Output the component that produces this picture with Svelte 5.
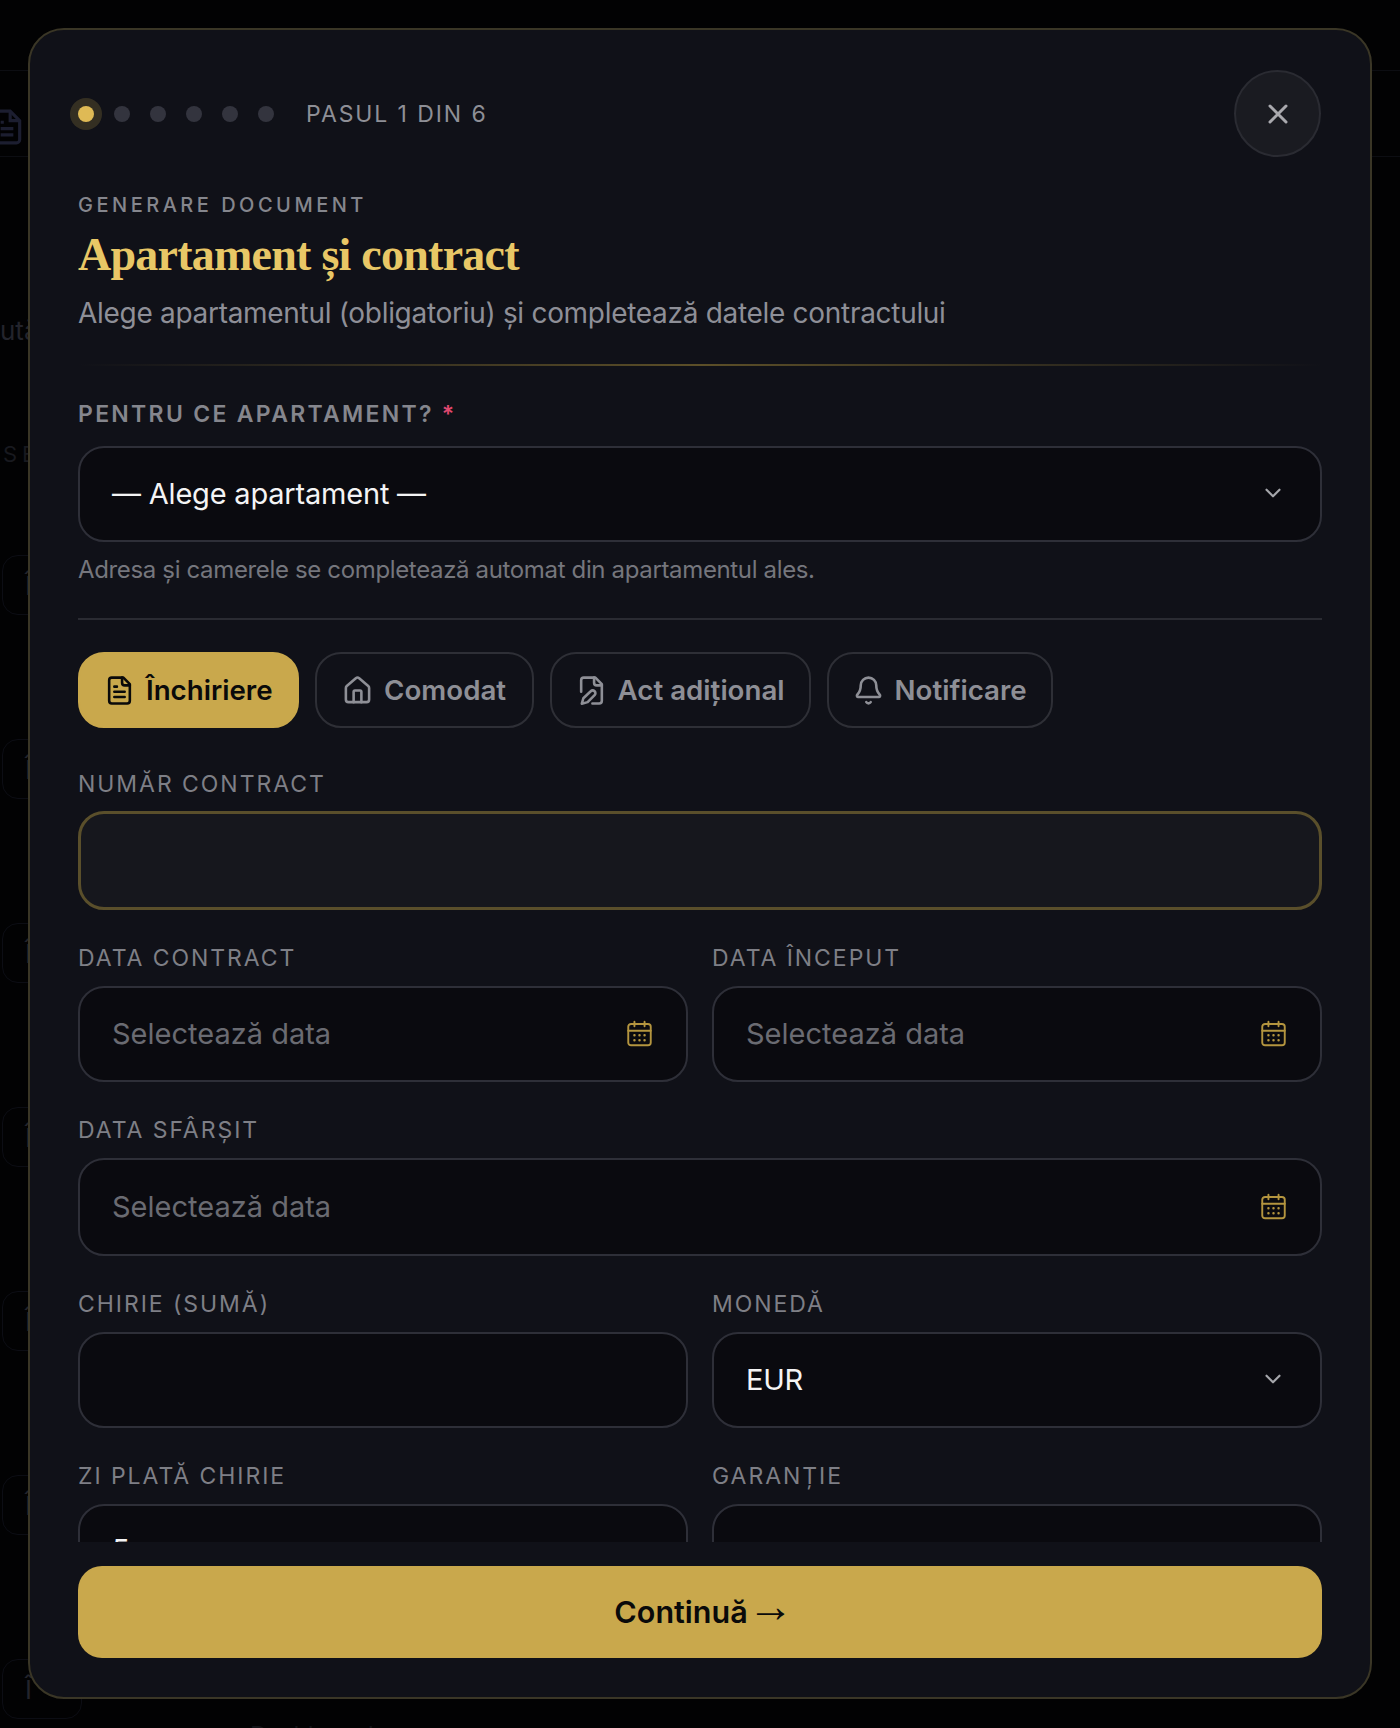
<script>
    const dots = [0, 1, 2, 3, 4, 5];
    const chips = ["Î", "Î", "Î", "Î", "Î", "Î", "Î"];
</script>

<div class="backdrop">
    <div class="bgPanel">
        <svg class="bgIcon" viewBox="0 0 24 24" fill="none" stroke="currentColor" stroke-width="2">
            <path d="M14 2H6a2 2 0 0 0-2 2v16a2 2 0 0 0 2 2h12a2 2 0 0 0 2-2V8z" />
            <path d="M14 2v6h6M16 13H8M16 17H8M10 9H8" />
        </svg>
    </div>
    <div class="bgText">ută</div>
    <div class="bgSection">SE</div>
    <div class="bgList">
        {#each chips as chip}
            <div class="bgChip">{chip}</div>
        {/each}
    </div>
    <div class="bgFoot">Dashboard</div>
</div>

<div class="overlay">
    <div class="modal">

        <div class="head">
            <div class="steps">
                {#each dots as d}
                    <span class="dot" class:active={d == 0}></span>
                {/each}
                <span class="stepText">PASUL 1 DIN 6</span>
            </div>
            <button class="close" aria-label="Inchide">
                <svg viewBox="0 0 20 20" width="20" height="20" fill="none" stroke="currentColor" stroke-width="3" stroke-linecap="round">
                    <path d="M2 2l16 16M18 2L2 18" />
                </svg>
            </button>
        </div>

        <div class="kicker">GENERARE DOCUMENT</div>
        <h1 class="title">Apartament și contract</h1>
        <p class="subtitle">Alege apartamentul (obligatoriu) și completează datele contractului</p>
        <div class="goldLine"></div>

        <div class="scroll">
            <div class="aptLabel">PENTRU CE APARTAMENT? <span class="star">*</span></div>
            <div class="input select apt">
                <span class="value">— Alege apartament —</span>
                <svg class="chev" viewBox="0 0 24 24" fill="none" stroke="currentColor" stroke-width="2" stroke-linecap="round" stroke-linejoin="round"><path d="m6 9 6 6 6-6" /></svg>
            </div>
            <p class="hint">Adresa și camerele se completează automat din apartamentul ales.</p>
            <div class="rule"></div>

            <div class="tabs">
                <button class="tab on">
                    <svg viewBox="0 0 24 24" fill="none" stroke="currentColor" stroke-width="2" stroke-linecap="round" stroke-linejoin="round">
                        <path d="M15 2H6a2 2 0 0 0-2 2v16a2 2 0 0 0 2 2h12a2 2 0 0 0 2-2V7z" />
                        <path d="M14 2v4a2 2 0 0 0 2 2h4M10 9H8M16 13H8M16 17H8" />
                    </svg>
                    Închiriere
                </button>
                <button class="tab">
                    <svg viewBox="0 0 24 24" fill="none" stroke="currentColor" stroke-width="2" stroke-linecap="round" stroke-linejoin="round">
                        <path d="M3 10a2 2 0 0 1 .7-1.5l7-6a2 2 0 0 1 2.600 0l7 6A2 2 0 0 1 21 10v9a2 2 0 0 1-2 2H5a2 2 0 0 1-2-2z" />
                        <path d="M15 21v-8a1 1 0 0 0-1-1h-4a1 1 0 0 0-1 1v8" />
                    </svg>
                    Comodat
                </button>
                <button class="tab">
                    <svg viewBox="0 0 24 24" fill="none" stroke="currentColor" stroke-width="2" stroke-linecap="round" stroke-linejoin="round">
                        <path d="M12.700 22H18a2 2 0 0 0 2-2V7l-5-5H6a2 2 0 0 0-2 2v9" />
                        <path d="M14 2v4a2 2 0 0 0 2 2h4" />
                        <path d="M11.400 12.600a2 2 0 1 1 3 3L9 21l-4.500 1.200L5.700 18z" />
                    </svg>
                    Act adițional
                </button>
                <button class="tab">
                    <svg viewBox="0 0 24 24" fill="none" stroke="currentColor" stroke-width="2" stroke-linecap="round" stroke-linejoin="round">
                        <path d="M10.300 21a2 2 0 0 0 3.400 0" />
                        <path d="M3.300 15.300A1 1 0 0 0 4 17h16a1 1 0 0 0 .7-1.700C19.400 14 18 12.500 18 8A6 6 0 0 0 6 8c0 4.500-1.400 6-2.700 7.300" />
                    </svg>
                    Notificare
                </button>
            </div>

            <div class="field first">
                <div class="label">NUMĂR CONTRACT</div>
                <div class="input focus"></div>
            </div>

            <div class="row">
                <div class="field">
                    <div class="label">DATA CONTRACT</div>
                    <div class="input">
                        <span class="placeholder">Selectează data</span>
                        {@render calendar()}
                    </div>
                </div>
                <div class="field">
                    <div class="label">DATA ÎNCEPUT</div>
                    <div class="input">
                        <span class="placeholder">Selectează data</span>
                        {@render calendar()}
                    </div>
                </div>
            </div>

            <div class="field">
                <div class="label">DATA SFÂRȘIT</div>
                <div class="input tall">
                    <span class="placeholder">Selectează data</span>
                    {@render calendar()}
                </div>
            </div>

            <div class="row">
                <div class="field">
                    <div class="label">CHIRIE (SUMĂ)</div>
                    <div class="input"></div>
                </div>
                <div class="field">
                    <div class="label">MONEDĂ</div>
                    <div class="input select">
                        <span class="value">EUR</span>
                        <svg class="chev" viewBox="0 0 24 24" fill="none" stroke="currentColor" stroke-width="2" stroke-linecap="round" stroke-linejoin="round"><path d="m6 9 6 6 6-6" /></svg>
                    </div>
                </div>
            </div>

            <div class="row">
                <div class="field">
                    <div class="label">ZI PLATĂ CHIRIE</div>
                    <div class="input num"><span class="value">5</span></div>
                </div>
                <div class="field">
                    <div class="label">GARANȚIE</div>
                    <div class="input"></div>
                </div>
            </div>
        </div>

        <div class="foot">
            <button class="next"><span>Continuă</span><span class="arrow">→</span></button>
        </div>

    </div>
</div>

{#snippet calendar()}
    <svg class="cal" viewBox="0 0 24 24" fill="none" stroke="currentColor" stroke-width="1.700" stroke-linecap="round">
        <rect x="2" y="3.500" width="20" height="19" rx="2.500" />
        <path d="M2 9.500h20M7.500 1.500v4M16.500 1.500v4" />
        <path d="M7.500 13.500h.01M12 13.500h.01M16.500 13.500h.01M7.500 18h.01M12 18h.01M16.500 18h.01" stroke-width="2.200" />
    </svg>
{/snippet}

<style>

    :global(body) {
        background-color: #020203;
        font-family: "Inter", "Liberation Sans", sans-serif;
    }

    /* page behind the dialog, only the edges show */
    .backdrop {
        height: 1728px;
        overflow: hidden;
        color: #23242c;
    }

    .bgPanel {
        height: 85px;
        margin-top: 70px;
        display: flex;
        align-items: center;
        border-top: 1px solid #0c0d12;
        border-bottom: 1px solid #0c0d12;
    }

    .bgIcon {
        width: 38px;
        height: 38px;
        margin-left: -12px;
        margin-top: 26px;
        color: #1c1e30;
    }

    .bgText {
        font-size: 26px;
        margin-top: 158px;
        line-height: 32px;
    }

    .bgSection {
        font-size: 22px;
        letter-spacing: 5px;
        margin-top: 93px;
        margin-left: 3px;
        line-height: 28px;
        color: #18191f;
    }

    .bgList {
        display: flex;
        flex-direction: column;
        gap: 124px;
        margin-top: 87px;
    }

    .bgChip {
        width: 80px;
        height: 60px;
        margin-left: 2px;
        padding-left: 22px;
        box-sizing: border-box;
        line-height: 60px;
        font-size: 26px;
        border: 1px solid #0c0d14;
        border-radius: 16px;
    }

    .bgFoot {
        margin: 2px 0 0 250px;
        font-size: 24px;
        color: #131418;
    }

    .overlay {
        position: fixed;
        inset: 0;
        padding: 28px;
        box-sizing: border-box;
    }

    .modal {
        height: 1671px;
        box-sizing: border-box;
        background-color: #101118;
        border: 2px solid #3a3626;
        border-radius: 36px;
        padding: 40px 48px 39px;
        display: flex;
        flex-direction: column;
        overflow: hidden;
    }

    .head {
        display: flex;
        justify-content: space-between;
        align-items: center;
        height: 87px;
        flex: none;
    }

    .steps {
        display: flex;
        align-items: center;
        gap: 20px;
    }

    .dot {
        width: 16px;
        height: 16px;
        border-radius: 50%;
        background-color: #33343e;
    }

    .dot.active {
        background-color: #dfba55;
        box-shadow: 0 0 0 8px rgba(201, 168, 76, 0.2);
    }

    .stepText {
        margin-left: 12px;
        font-size: 23px;
        letter-spacing: 1.900px;
        color: #8e8f96;
    }

    .close {
        width: 87px;
        height: 87px;
        border-radius: 50%;
        background-color: #1a1b21;
        border: 2px solid #2a2b32;
        color: #a9a9ae;
        display: flex;
        align-items: center;
        justify-content: center;
        padding: 0;
        margin-right: 1px;
    }

    .kicker {
        margin-top: 35px;
        font-size: 20px;
        font-weight: 500;
        line-height: 26px;
        letter-spacing: 3.500px;
        color: #85868d;
        flex: none;
    }

    .title {
        margin: 9px 0 0;
        font-family: "Liberation Serif", serif;
        font-size: 46px;
        font-weight: 700;
        line-height: 56px;
        color: #e8c766;
        letter-spacing: -0.750px;
        flex: none;
    }

    .subtitle {
        margin: 10px 0 0;
        font-size: 28px;
        line-height: 40px;
        letter-spacing: -0.300px;
        color: #8e8f97;
        flex: none;
    }

    .goldLine {
        height: 2px;
        margin-top: 31px;
        background: linear-gradient(90deg, transparent, #5c4f28 50%, transparent);
        flex: none;
    }

    .scroll {
        flex: 1;
        min-height: 0;
        overflow: hidden;
    }

    .aptLabel {
        margin-top: 33px;
        font-size: 23px;
        font-weight: 600;
        line-height: 30px;
        letter-spacing: 2.300px;
        color: #85868d;
    }

    .star {
        color: #e0486f;
    }

    .input {
        height: 96px;
        box-sizing: border-box;
        background-color: #0a0a0f;
        border: 2px solid #2e2f38;
        border-radius: 26px;
        padding: 0 32px 2px;
        display: flex;
        align-items: center;
        justify-content: space-between;
        font-size: 29px;
    }

    .apt {
        margin-top: 17px;
    }

    .focus {
        height: 99px;
        background-color: #16171d;
        border: 3px solid #5a4f2b;
    }

    .tall {
        height: 98px;
    }

    .num {
        padding-bottom: 5px;
    }

    .value {
        color: #f4f4f5;
        letter-spacing: -0.200px;
    }

    .placeholder {
        color: #6a6b72;
    }

    .chev {
        width: 26px;
        height: 26px;
        color: #a5a6ab;
        margin-right: 2px;
    }

    .cal {
        width: 27px;
        height: 27px;
        color: #b4953f;
        margin-right: 1px;
    }

    .hint {
        margin: 12px 0 0;
        font-size: 24px;
        line-height: 32px;
        letter-spacing: -0.350px;
        color: #75767d;
    }

    .rule {
        height: 2px;
        margin-top: 32px;
        background-color: #2a2b32;
    }

    .tabs {
        display: flex;
        gap: 16px;
        margin-top: 32px;
    }

    .tab {
        height: 76px;
        min-width: 219px;
        box-sizing: border-box;
        display: flex;
        align-items: center;
        justify-content: center;
        gap: 11px;
        padding: 0 24px;
        font-family: inherit;
        font-size: 27.700px;
        font-weight: 600;
        color: #8e8f96;
        background-color: transparent;
        border: 2px solid #2e2f36;
        border-radius: 26px;
    }

    .tab svg {
        width: 31px;
        height: 31px;
    }

    .tab.on {
        background-color: #c9a84c;
        border-color: #c9a84c;
        color: #0a0a0a;
    }

    .field {
        margin-top: 33px;
        flex: 1;
    }

    .field.first {
        margin-top: 41px;
    }

    .field.first .label {
        margin-bottom: 12px;
    }

    .label {
        font-size: 23px;
        line-height: 30px;
        letter-spacing: 1.950px;
        color: #7e7f86;
        margin-bottom: 13px;
    }

    .row {
        display: flex;
        gap: 24px;
    }

    .foot {
        padding-top: 24px;
        flex: none;
    }

    .next {
        width: 100%;
        height: 92px;
        border: none;
        border-radius: 24px;
        padding: 0 0 2px 8px;
        background-color: #c9a84c;
        color: #0a0a0a;
        font-family: inherit;
        font-size: 30.500px;
        font-weight: 600;
        display: flex;
        align-items: center;
        justify-content: center;
    }

    .arrow {
        font-family: "Liberation Sans", sans-serif;
        font-size: 46px;
        font-weight: 700;
        line-height: 44px;
        padding-bottom: 10px;
    }

</style>
